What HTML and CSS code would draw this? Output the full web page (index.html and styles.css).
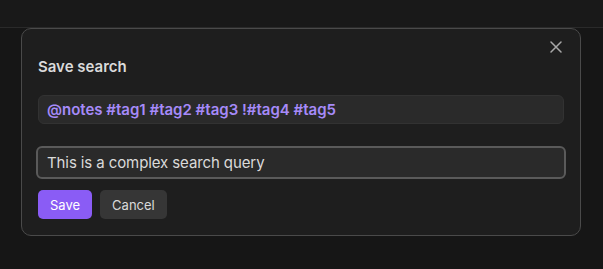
FILE: index.html
```html
<!DOCTYPE html>
<html>
<head>
<meta charset="utf-8">
<link rel="stylesheet" href="styles.css">
</head>
<body>
<div class="topbar"></div>
<div class="stage">
  <div class="modal">
    <button class="close" aria-label="Close">
      <svg width="12" height="12" viewBox="0 0 12 12"><path d="M1 1L11 11M11 1L1 11" stroke="#a8a8a8" stroke-width="1.5" stroke-linecap="round"/></svg>
    </button>
    <div class="title">Save search</div>
    <div class="query">@notes #tag1 #tag2 #tag3 !#tag4 #tag5</div>
    <div class="name-input">This is a complex search query</div>
    <div class="actions">
      <button class="btn primary">Save</button>
      <button class="btn">Cancel</button>
    </div>
  </div>
</div>
</body>
</html>
```

FILE: styles.css
```css
* { box-sizing: border-box; }
html, body { margin: 0; padding: 0; }
body {
  background: #161616;
  width: 603px;
  height: 269px;
  overflow: hidden;
  font-family: Inter, "Noto Sans", sans-serif;
}
.topbar {
  height: 28px;
  background: #191919;
  border-bottom: 1px solid #2a2a2a;
}
.stage {
  padding-left: 21px;
}
.modal {
  position: relative;
  width: 560px;
  height: 208px;
  background: #1e1e1e;
  border: 1px solid #4a4a4a;
  border-radius: 10px;
  padding: 28px 16px 16px 16px;
}
.close {
  position: absolute;
  top: 11px;
  right: 17px;
  width: 14px;
  height: 14px;
  padding: 0;
  border: 0;
  background: none;
  display: flex;
  align-items: center;
  justify-content: center;
}
.title {
  font-size: 15px;
  font-weight: 600;
  line-height: 20px;
  color: #dadada;
}
.query {
  margin-top: 18px;
  height: 29px;
  background: #2a2a2a;
  border: 1px solid #323232;
  border-radius: 6px;
  padding: 0 8px;
  display: flex;
  align-items: center;
  font-size: 15px;
  font-weight: 600;
  color: #a68af9;
}
.name-input {
  margin: 22px -2px 0 -2px;
  height: 33px;
  background: #2a2a2a;
  border: 2px solid #5a5a5a;
  border-radius: 6px;
  padding: 0 9px;
  display: flex;
  align-items: center;
  font-size: 15px;
  letter-spacing: -0.1px;
  color: #dadada;
}
.actions {
  display: flex;
  gap: 8px;
  margin-top: 11px;
}
.btn {
  height: 29px;
  border: 0;
  border-radius: 5px;
  padding: 0 12px;
  font-family: Inter, "Noto Sans", sans-serif;
  font-size: 13px;
  color: #dadada;
  background: #363636;
}
.btn.primary {
  background: #8a5cf5;
  color: #ffffff;
}
```
